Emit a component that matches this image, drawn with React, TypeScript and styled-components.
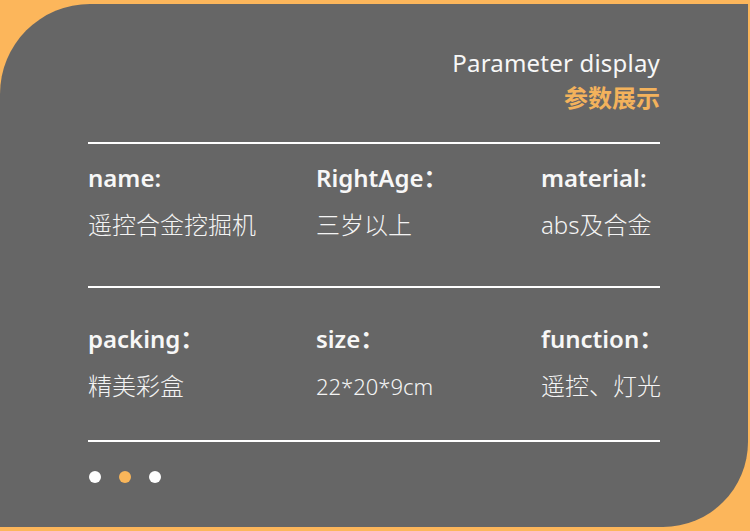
import React from "react";
import styled, { createGlobalStyle } from "styled-components";

const GlobalStyle = createGlobalStyle`
  html, body {
    margin: 0;
    padding: 0;
    background: #fcb65b;
  }
  body {
    width: 750px;
    height: 531px;
    overflow: hidden;
    font-family: "Noto Sans", "Noto Sans CJK SC", sans-serif;
  }
`;

const Page = styled.div`
  width: 750px;
  height: 531px;
  padding-top: 4px;
  box-sizing: border-box;
`;

const Panel = styled.div`
  height: 523px;
  box-sizing: border-box;
  background: #666666;
  border-radius: 90px 0 85px 0;
  margin-right: 2px;
  padding: 45px 88px 0 88px;
  display: flex;
  flex-direction: column;
`;

const Header = styled.div`
  display: flex;
  flex-direction: column;
  align-items: flex-end;
`;

const Title = styled.div`
  color: #f7f7f7;
  font-size: 24px;
  line-height: 28px;
  font-weight: 400;
  letter-spacing: 0.2px;
`;

const SubTitle = styled.div`
  margin-top: 6px;
  color: #f3b25c;
  font-size: 24px;
  line-height: 28px;
  font-weight: 700;
  font-family: "Noto Sans CJK SC", sans-serif;
`;

const Divider = styled.div<{ $top: number }>`
  margin-top: ${({ $top }) => $top}px;
  height: 2px;
  background: #ffffff;
`;

const Row = styled.div<{ $top: number }>`
  margin-top: ${({ $top }) => $top}px;
  display: grid;
  grid-template-columns: 228px 225px 1fr;
`;

const Cell = styled.div`
  display: flex;
  flex-direction: column;
  gap: 17px;
`;

const Label = styled.div`
  color: #f7f7f7;
  font-size: 24px;
  line-height: 30px;
  font-weight: 600;
  white-space: nowrap;
`;

const Value = styled.div`
  color: #f4f4f4;
  font-size: 24px;
  line-height: 30px;
  font-weight: 300;
  white-space: nowrap;
`;

const Number = styled.span`
  font-size: 22px;
`;

const Dots = styled.div`
  margin-top: 29px;
  display: flex;
  gap: 18px;
  padding-left: 1px;
`;

const Dot = styled.span<{ $active?: boolean }>`
  width: 12px;
  height: 12px;
  border-radius: 50%;
  background: ${({ $active }) => ($active ? "#f9b65a" : "#ffffff")};
`;

const rows: { label: string; value: React.ReactNode }[][] = [
  [
    { label: "name:", value: "遥控合金挖掘机" },
    { label: "RightAge：", value: "三岁以上" },
    { label: "material:", value: "abs及合金" },
  ],
  [
    { label: "packing：", value: "精美彩盒" },
    { label: "size：", value: <Number>22*20*9cm</Number> },
    { label: "function：", value: "遥控、灯光" },
  ],
];

const App: React.FC = () => {
  return (
    <>
      <GlobalStyle />
      <Page>
        <Panel>
          <Header>
            <Title>Parameter display</Title>
            <SubTitle>参数展示</SubTitle>
          </Header>
          <Divider $top={31} />
          <Row $top={19}>
            {rows[0].map((item) => (
              <Cell key={item.label}>
                <Label>{item.label}</Label>
                <Value>{item.value}</Value>
              </Cell>
            ))}
          </Row>
          <Divider $top={46} />
          <Row $top={36}>
            {rows[1].map((item) => (
              <Cell key={item.label}>
                <Label>{item.label}</Label>
                <Value>{item.value}</Value>
              </Cell>
            ))}
          </Row>
          <Divider $top={39} />
          <Dots>
            <Dot />
            <Dot $active />
            <Dot />
          </Dots>
        </Panel>
      </Page>
    </>
  );
};

export default App;
